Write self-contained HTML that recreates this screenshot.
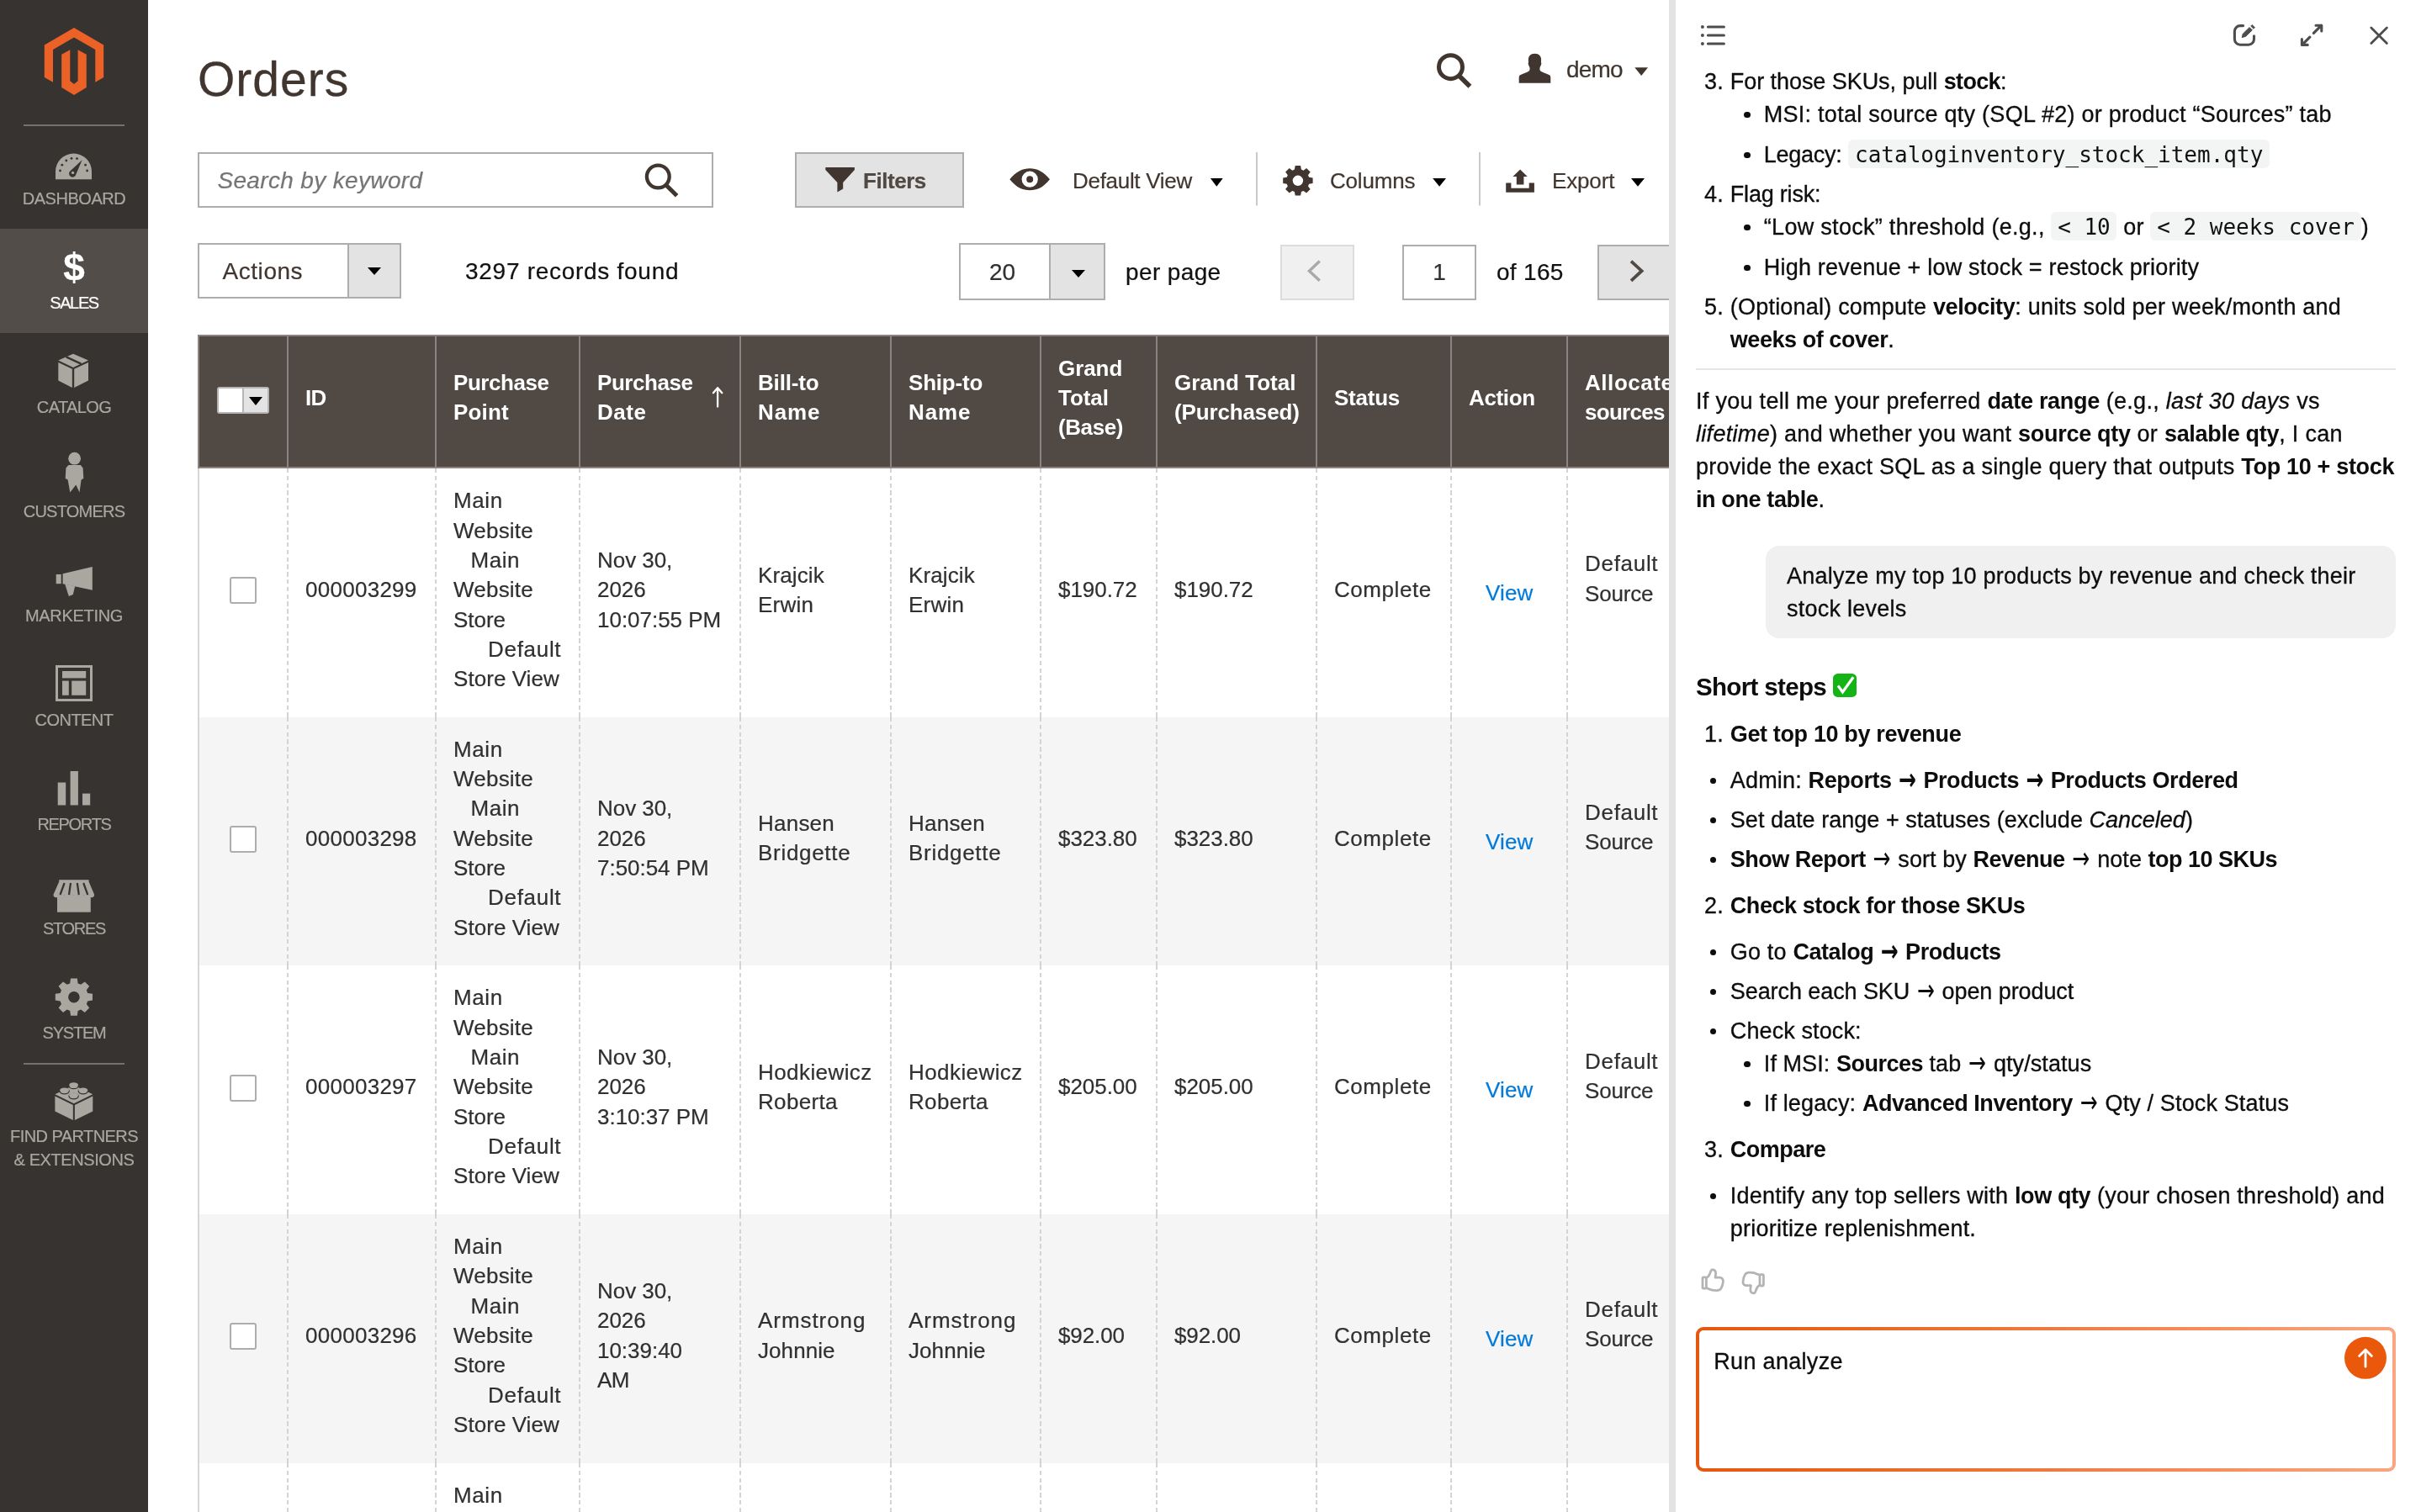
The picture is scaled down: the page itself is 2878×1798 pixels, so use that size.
<!DOCTYPE html><html lang="en"><head>
<meta charset="utf-8">
<title>Orders / Operations / Sales / Magento Admin</title>
<style>
*{box-sizing:border-box;margin:0;padding:0}
html,body{width:2878px;height:1798px;overflow:hidden;background:#fff}
body{position:relative;font-family:"Liberation Sans",sans-serif;color:#303030}
.abs{position:absolute}
.nw{white-space:nowrap}
/* ---------- sidebar ---------- */
#side{will-change:transform;position:absolute;left:0;top:0;width:176px;height:1798px;background:#373330}
#side .sep{position:absolute;left:28px;width:120px;height:2px;background:#75716d}
.mi{-webkit-text-stroke:.2px;position:absolute;left:0;width:176px;height:124px;color:#aaa6a0;text-align:center;font-size:20px;line-height:28px;letter-spacing:-.35px;white-space:nowrap}
.mi.on{background:#524d49;color:#fff}
.mi span{position:absolute;left:0;right:0;top:74px;display:block}
.mi em{font-style:normal;letter-spacing:calc(-.35px + var(--d,0px))}
.mi svg{position:absolute;fill:#aaa6a0}
.mi.on svg{fill:#fff}
/* ---------- main ---------- */
#main{will-change:transform;position:absolute;left:0;top:0;width:1984px;height:1798px;overflow:hidden}
#divider{position:absolute;left:1984px;top:0;width:8px;height:1798px;background:#e3e3e3}
h1{-webkit-text-stroke:.3px;position:absolute;left:235px;top:60px;font-size:57px;line-height:68px;font-weight:400;color:#41362f;letter-spacing:1px;white-space:nowrap}
.t28{-webkit-text-stroke:.22px;position:absolute;z-index:3;font-size:28px;line-height:36px;white-space:nowrap;color:#41362f}
.box{position:absolute;border:2px solid #adadad;background:#fff}
.gbox{position:absolute;border:2px solid #adadad;background:#e3e3e3}
.caret{position:absolute;z-index:3;width:0;height:0;border-left:8px solid transparent;border-right:8px solid transparent;border-top:9px solid #41362f}
.caret.k{border-top-color:#000}
.vsep{position:absolute;width:2px;background:#d1d1d1}
/* ---------- table ---------- */
#grid{position:absolute;left:235px;top:398px;width:1760px;height:1400px;font-size:26px;line-height:35.3px;letter-spacing:.2px}
#grid .td span{letter-spacing:calc(.2px + var(--d,0px))}
#grid .th span{letter-spacing:calc(-.2px + var(--d,0px))}
#grid .hd{position:absolute;left:0;top:0;height:159.3px;width:1760px;background:#514943;border:2px solid #8a837f;border-right:0}
#grid .row{position:absolute;left:0;width:1760px;height:296px;background:#fff}
#grid .row.alt{background:#f5f5f5}
#grid .lb{position:absolute;left:0;top:159px;width:2px;height:1300px;background:#d6d6d6}
.th{position:absolute;top:0;height:159px;border-left:2px solid #8a837f;color:#fff;font-weight:700;white-space:nowrap;letter-spacing:-.2px}
.th i{position:absolute;left:20px;font-style:normal;display:block}
.td{position:absolute;top:0;height:296px;white-space:nowrap;color:#303030;background:repeating-linear-gradient(to bottom,#d4d4d4 0,#d4d4d4 5.4px,transparent 5.4px,transparent 8.8px) left top/2px 100% no-repeat}
.td i{position:absolute;left:22px;font-style:normal;display:block;-webkit-text-stroke:.22px}
.td a{color:#007bdb;text-decoration:none}
.td u{text-decoration:none;display:inline-block}
.td u.i1{padding-left:20.4px}
.td u.i2{padding-left:41px}
.cb{position:absolute;width:32px;height:32px;border:2px solid #adadad;border-radius:3px;background:#fff}
.msel{position:absolute;left:23px;top:62px;width:62px;height:32px;border:2px solid #b5b5b5;border-radius:3px;background:#fff}
.msel s{position:absolute;left:28px;top:0;width:30px;height:28px;background:#e3e3e3;border-left:2px solid #b5b5b5}
.msel s:after{content:"";position:absolute;left:6px;top:9.5px;border-left:8px solid transparent;border-right:8px solid transparent;border-top:10px solid #000}
.sort{position:absolute;left:606px;top:52px;color:#fff;font-size:28px;line-height:36px;font-family:"DejaVu Sans",sans-serif}
/* ---------- chat ---------- */
#chat{will-change:transform;position:absolute;left:1992px;top:0;width:886px;height:1798px;background:#fff;color:#0d0d0d;font-size:27px;line-height:39px;letter-spacing:calc(.24px + var(--d,0px))}
#chat .ln{position:absolute;white-space:nowrap;-webkit-text-stroke:.3px}
#chat .ln b,#chat .ln code{-webkit-text-stroke:0}
#chat .ln .ar{-webkit-text-stroke:0}
#chat .ln,#chat .ln span{letter-spacing:calc(.24px + var(--d,0px))}
#chat .ar{font-family:"DejaVu Sans",sans-serif;font-size:25px;letter-spacing:0!important;display:inline-block;width:23.5px;text-align:center;line-height:30px;position:relative;top:-2.4px;transform:scaleY(1.45);transform-origin:50% 44%}
#chat b{font-weight:700;letter-spacing:calc(-.36px + var(--d,0px))}
#chat b.h3{font-size:29.5px}
#chat em{font-style:italic}
#chat code{font-family:"DejaVu Sans Mono","Liberation Mono",monospace;font-size:26px;letter-spacing:0;background:#f3f4f4;border-radius:6px;padding:3px 7.7px 1.4px;color:#111}
#chat svg{position:absolute}
#chat .dot{position:absolute;width:7.2px;height:7.2px;border-radius:50%;background:#0d0d0d}
#chat .hr{position:absolute;height:2px;background:#e6e6e6}
#chat .bubble{position:absolute;background:#f0f0f0;border-radius:16px}
#chat .chk{position:absolute;width:28px;height:28px;border-radius:6px;background:#2fc12f;color:#fff;font-family:"DejaVu Sans",sans-serif;font-size:22px;line-height:28px;text-align:center;letter-spacing:0}
#chat .inp{position:absolute;border-radius:9px;background:linear-gradient(90deg,#e5570f 0%,#ee7a3d 50%,#fba680 100%);padding:4px}
#chat .inp div{width:100%;height:100%;background:#fff;border-radius:5px}
</style>
</head>
<body>
<div id="main">
<h1>Orders</h1>
<svg class="abs" style="left:0;top:0;z-index:3" width="1984" height="400" viewBox="0 0 1984 400">
<g fill="none" stroke="#41362f" stroke-width="5"><circle cx="1724.5" cy="79.7" r="14"></circle><path d="M1734.4,90L1747.4,102.8" stroke-width="5.6"></path>
<circle cx="782.3" cy="210" r="13.4" stroke-width="4.3"></circle><path d="M792,220.2L804.6,232.8" stroke-width="5"></path></g>
<g fill="#41362f">
<path d="M1824.5,63.8c5.2,0 7.8,3.4 7.6,7.6c-0.1,2.2 -0.2,3 0.3,4.2c-0.4,2.4 -1.4,3.2 -1.8,4.6c-0.4,1.6 -0.2,3.6 0.8,4.4c2.6,1.6 6.6,3 9.4,4.2c1.8,0.8 2.5,1.6 2.5,3.4v6.6h-37.6v-6.6c0,-1.8 0.7,-2.6 2.5,-3.4c2.8,-1.2 6.8,-2.6 9.4,-4.2c1,-0.8 1.2,-2.8 0.8,-4.4c-0.4,-1.4 -1.4,-2.2 -1.8,-4.6c0.5,-1.2 0.4,-2 0.3,-4.2c-0.2,-4.2 2.4,-7.6 7.6,-7.6z"></path>
<polygon points="1943.3,80.2 1959,80.2 1951.2,90"></polygon>
<path d="M981.3,199H1015.9V202L1002.2,217V224.6L995.4,228.6V217L981.3,202Z"></path>
<path fill-rule="evenodd" d="M1200.3,213.3C1208,203.5 1216,200.2 1224.2,200.2C1232.4,200.2 1240.4,203.5 1248,213.3C1240.4,223 1232.4,226.3 1224.2,226.3C1216,226.3 1208,223 1200.3,213.3ZM1224.2,203.6A9.6,9.6 0 1 0 1224.2,222.8A9.6,9.6 0 1 0 1224.2,203.6ZM1224.2,209.2A4,4 0 1 1 1224.2,217.2A4,4 0 1 1 1224.2,209.2Z"></path>
<path fill-rule="evenodd" d="M1556.1,210.8 L1560.6,211.6 L1560.6,218.0 L1556.1,218.8 L1555.0,221.4 L1557.7,225.0 L1553.1,229.6 L1549.5,226.9 L1546.9,228.0 L1546.1,232.5 L1539.7,232.5 L1538.9,228.0 L1536.3,226.9 L1532.7,229.6 L1528.1,225.0 L1530.8,221.4 L1529.7,218.8 L1525.2,218.0 L1525.2,211.6 L1529.7,210.8 L1530.8,208.2 L1528.1,204.6 L1532.7,200.0 L1536.3,202.7 L1538.9,201.6 L1539.7,197.1 L1546.1,197.1 L1546.9,201.6 L1549.5,202.7 L1553.1,200.0 L1557.7,204.6 L1555.0,208.2ZM1549.1,214.8A6.2,6.2 0 1 0 1536.7,214.8A6.2,6.2 0 1 0 1549.1,214.8Z"></path>
<path d="M1790.2,217.5H1796.4V223.7H1817.7V217.5H1823.9V228.7H1790.2ZM1807.1,201.6L1815.8,210H1811.4V219.5H1802.8V210H1798.4Z"></path>
</g>
<g fill="#000"><polygon points="1438.9,212 1453.7,212 1446.3,221.8"></polygon><polygon points="1703.2,212 1719,212 1711.1,221.8"></polygon><polygon points="1939,212 1955,212 1947,221.8"></polygon></g>
<g stroke="#cacaca" stroke-width="2"><path d="M1494,181V244.6"></path><path d="M1759,181V244.6"></path></g>
</svg>
<div class="t28" style="left:1862px;top:64.6px;letter-spacing:-.8px">demo</div>
<div class="box" style="left:235px;top:181px;width:613px;height:66px"></div>
<div class="t28" style="left:258.4px;top:196.8px;font-style:italic;color:#757575;letter-spacing:.35px">Search by keyword</div>
<div class="gbox" style="left:945px;top:181px;width:201px;height:66px"></div>
<div class="t28" style="left:1026px;top:197px;font-size:26px;font-weight:700;letter-spacing:-.45px;color:#514943">Filters</div>
<div class="t28" style="left:1275px;top:197.4px;font-size:26px;letter-spacing:-.3px">Default View</div>
<div class="t28" style="left:1581px;top:197.4px;font-size:26px;letter-spacing:-.2px">Columns</div>
<div class="t28" style="left:1845px;top:197.4px;font-size:26px;letter-spacing:-.15px">Export</div>
<div class="box" style="left:235px;top:289px;width:242px;height:66px"></div>
<div class="gbox" style="left:413.4px;top:289px;width:63.6px;height:66px"></div>
<div class="caret k" style="left:437px;top:318px"></div>
<div class="t28" style="left:264.5px;top:304.6px;letter-spacing:.55px">Actions</div>
<div class="t28" style="left:553px;top:304.6px;letter-spacing:.72px;color:#111">3297 records found</div>
<div class="box" style="left:1140px;top:289px;width:174px;height:68px"></div>
<div class="gbox" style="left:1247px;top:289px;width:67px;height:68px"></div>
<div class="caret k" style="left:1274px;top:321px"></div>
<div class="t28" style="left:1176px;top:306.4px;color:#303030">20</div>
<div class="t28" style="left:1338px;top:306.4px;letter-spacing:.38px;color:#111">per page</div>
<div class="gbox" style="left:1522px;top:291px;width:88px;height:66px;background:#f0f0f0;border-color:#dcdcdc"></div>
<div class="box" style="left:1667px;top:291px;width:88px;height:66px"></div>
<div class="t28" style="left:1667px;top:306.4px;width:88px;text-align:center;color:#303030">1</div>
<div class="t28" style="left:1779px;top:306.4px;letter-spacing:.3px;color:#111">of 165</div>
<div class="gbox" style="left:1899px;top:291px;width:88px;height:66px"></div>
<svg class="abs" style="left:1500px;top:291px" width="484" height="66" viewBox="1500 291 484 66"><g fill="none" stroke-width="3.4"><path d="M1568.8,310.6L1556.4,322.2L1568.8,333.8" stroke="#a9a9a9"></path><path d="M1939,310.6L1951.6,322.2L1939,333.8" stroke="#514943" stroke-width="3.8"></path></g></svg>
<div id="grid">
<div class="hd"></div>
<div class="msel"><s></s></div>
<div class="th" style="left:106px;width:176px"><i style="top:57.9px"><span style="--d: -0.401px;">ID</span></i></div>
<div class="th" style="left:282px;width:171px"><i style="top:40.2px"><span style="--d: -0.246px;">Purchase</span><br><span style="--d: 0.362px;">Point</span></i></div>
<div class="th" style="left:453px;width:191px"><i style="top:40.2px"><span style="--d: -0.246px;">Purchase</span><br><span style="--d: 0.709px;">Date</span></i></div>
<div class="th" style="left:644px;width:179px"><i style="top:40.2px"><span style="--d: 0.036px;">Bill-to</span><br><span style="--d: 1.069px;">Name</span></i></div>
<div class="th" style="left:823px;width:178px"><i style="top:40.2px"><span style="--d: -0.004px;">Ship-to</span><br><span style="--d: 1.069px;">Name</span></i></div>
<div class="th" style="left:1001px;width:138px"><i style="top:22.6px"><span style="--d: 0.126px;">Grand</span><br><span style="--d: 0.143px;">Total</span><br><span style="--d: -0.214px;">(Base)</span></i></div>
<div class="th" style="left:1139px;width:190px"><i style="top:40.2px"><span style="--d: 0.258px;">Grand Total</span><br><span style="--d: 0.058px;">(Purchased)</span></i></div>
<div class="th" style="left:1329px;width:160px"><i style="top:57.9px"><span style="--d: -0.044px;">Status</span></i></div>
<div class="th" style="left:1489px;width:138px"><i style="top:57.9px"><span style="--d: -0.149px;">Action</span></i></div>
<div class="th" style="left:1627px;width:133px"><i style="top:40.2px"><span style="--d: 0.752px;">Allocated</span><br><span style="--d: -0.504px;">sources</span></i></div>
<svg class="abs" style="left:600px;top:50px" width="40" height="50" viewBox="835 448 40 50"><path d="M853.1,483.6V461.4M847.9,467.2L853.1,461.2L858.3,467.2" fill="none" stroke="#fff" stroke-width="2.3" stroke-linecap="round" stroke-linejoin="round"></path></svg>
<div class="row" style="top:159.3px">
<div class="cb" style="left:38px;top:129.2px"></div>
<div class="td" style="left:106px;width:176px"><i style="top:127.0px"><span style="--d: 0.072px;">000003299</span></i></div>
<div class="td" style="left:282px;width:171px"><i style="top:21.1px"><span style="--d: 0.384px;">Main</span><br><span style="--d: 0.020px;">Website</span><br><u class="i1"><span style="--d: 0.384px;">Main</span></u><br><span style="--d: 0.020px;">Website</span><br><span style="--d: -0.250px;">Store</span><br><u class="i2"><span style="--d: 0.501px;">Default</span></u><br><span style="--d: -0.147px;">Store View</span></i></div>
<div class="td" style="left:453px;width:191px"><i style="top:91.7px"><span style="--d: -0.245px;">Nov 30,</span><br><span style="--d: -0.237px;">2026</span><br><span style="--d: -0.222px;">10:07:55 PM</span></i></div>
<div class="td" style="left:644px;width:179px"><i style="top:109.3px"><span style="--d: -0.089px;">Krajcik</span><br><span style="--d: 0.035px;">Erwin</span></i></div>
<div class="td" style="left:823px;width:178px"><i style="top:109.3px"><span style="--d: -0.089px;">Krajcik</span><br><span style="--d: 0.035px;">Erwin</span></i></div>
<div class="td" style="left:1001px;width:138px"><i style="top:127.0px"><span style="--d: -0.242px;">$190.72</span></i></div>
<div class="td" style="left:1139px;width:190px"><i style="top:127.0px"><span style="--d: -0.242px;">$190.72</span></i></div>
<div class="td" style="left:1329px;width:160px"><i style="top:127.0px"><span style="--d: 0.364px;">Complete</span></i></div>
<div class="td" style="left:1489px;width:138px"><i style="top:130.8px;left:42px"><a><span style="--d: -0.047px;">View</span></a></i></div>
<div class="td" style="left:1627px;width:133px"><i style="top:96.2px"><span style="--d: 0.501px;">Default</span><br><span style="--d: -0.365px;">Source</span></i></div>
</div>
<div class="row alt" style="top:454.8px">
<div class="cb" style="left:38px;top:129.2px"></div>
<div class="td" style="left:106px;width:176px"><i style="top:127.0px"><span style="--d: 0.072px;">000003298</span></i></div>
<div class="td" style="left:282px;width:171px"><i style="top:21.1px"><span style="--d: 0.384px;">Main</span><br><span style="--d: 0.020px;">Website</span><br><u class="i1"><span style="--d: 0.384px;">Main</span></u><br><span style="--d: 0.020px;">Website</span><br><span style="--d: -0.250px;">Store</span><br><u class="i2"><span style="--d: 0.501px;">Default</span></u><br><span style="--d: -0.147px;">Store View</span></i></div>
<div class="td" style="left:453px;width:191px"><i style="top:91.7px"><span style="--d: -0.245px;">Nov 30,</span><br><span style="--d: -0.237px;">2026</span><br><span style="--d: -0.228px;">7:50:54 PM</span></i></div>
<div class="td" style="left:644px;width:179px"><i style="top:109.3px"><span style="--d: 0.029px;">Hansen</span><br><span style="--d: 0.503px;">Bridgette</span></i></div>
<div class="td" style="left:823px;width:178px"><i style="top:109.3px"><span style="--d: 0.029px;">Hansen</span><br><span style="--d: 0.503px;">Bridgette</span></i></div>
<div class="td" style="left:1001px;width:138px"><i style="top:127.0px"><span style="--d: -0.242px;">$323.80</span></i></div>
<div class="td" style="left:1139px;width:190px"><i style="top:127.0px"><span style="--d: -0.242px;">$323.80</span></i></div>
<div class="td" style="left:1329px;width:160px"><i style="top:127.0px"><span style="--d: 0.364px;">Complete</span></i></div>
<div class="td" style="left:1489px;width:138px"><i style="top:130.8px;left:42px"><a><span style="--d: -0.047px;">View</span></a></i></div>
<div class="td" style="left:1627px;width:133px"><i style="top:96.2px"><span style="--d: 0.501px;">Default</span><br><span style="--d: -0.365px;">Source</span></i></div>
</div>
<div class="row" style="top:750.4px">
<div class="cb" style="left:38px;top:129.2px"></div>
<div class="td" style="left:106px;width:176px"><i style="top:127.0px"><span style="--d: 0.072px;">000003297</span></i></div>
<div class="td" style="left:282px;width:171px"><i style="top:21.1px"><span style="--d: 0.384px;">Main</span><br><span style="--d: 0.020px;">Website</span><br><u class="i1"><span style="--d: 0.384px;">Main</span></u><br><span style="--d: 0.020px;">Website</span><br><span style="--d: -0.250px;">Store</span><br><u class="i2"><span style="--d: 0.501px;">Default</span></u><br><span style="--d: -0.147px;">Store View</span></i></div>
<div class="td" style="left:453px;width:191px"><i style="top:91.7px"><span style="--d: -0.245px;">Nov 30,</span><br><span style="--d: -0.237px;">2026</span><br><span style="--d: -0.228px;">3:10:37 PM</span></i></div>
<div class="td" style="left:644px;width:179px"><i style="top:109.3px"><span style="--d: 0.221px;">Hodkiewicz</span><br><span style="--d: 0.128px;">Roberta</span></i></div>
<div class="td" style="left:823px;width:178px"><i style="top:109.3px"><span style="--d: 0.221px;">Hodkiewicz</span><br><span style="--d: 0.128px;">Roberta</span></i></div>
<div class="td" style="left:1001px;width:138px"><i style="top:127.0px"><span style="--d: -0.242px;">$205.00</span></i></div>
<div class="td" style="left:1139px;width:190px"><i style="top:127.0px"><span style="--d: -0.242px;">$205.00</span></i></div>
<div class="td" style="left:1329px;width:160px"><i style="top:127.0px"><span style="--d: 0.364px;">Complete</span></i></div>
<div class="td" style="left:1489px;width:138px"><i style="top:130.8px;left:42px"><a><span style="--d: -0.047px;">View</span></a></i></div>
<div class="td" style="left:1627px;width:133px"><i style="top:96.2px"><span style="--d: 0.501px;">Default</span><br><span style="--d: -0.365px;">Source</span></i></div>
</div>
<div class="row alt" style="top:1046.0px">
<div class="cb" style="left:38px;top:129.2px"></div>
<div class="td" style="left:106px;width:176px"><i style="top:127.0px"><span style="--d: 0.072px;">000003296</span></i></div>
<div class="td" style="left:282px;width:171px"><i style="top:21.1px"><span style="--d: 0.384px;">Main</span><br><span style="--d: 0.020px;">Website</span><br><u class="i1"><span style="--d: 0.384px;">Main</span></u><br><span style="--d: 0.020px;">Website</span><br><span style="--d: -0.250px;">Store</span><br><u class="i2"><span style="--d: 0.501px;">Default</span></u><br><span style="--d: -0.147px;">Store View</span></i></div>
<div class="td" style="left:453px;width:191px"><i style="top:74.1px"><span style="--d: -0.245px;">Nov 30,</span><br><span style="--d: -0.237px;">2026</span><br><span style="--d: -0.227px;">10:39:40</span><br><span style="--d: -0.751px;">AM</span></i></div>
<div class="td" style="left:644px;width:179px"><i style="top:109.3px"><span style="--d: 0.741px;">Armstrong</span><br><span style="--d: -0.126px;">Johnnie</span></i></div>
<div class="td" style="left:823px;width:178px"><i style="top:109.3px"><span style="--d: 0.741px;">Armstrong</span><br><span style="--d: -0.126px;">Johnnie</span></i></div>
<div class="td" style="left:1001px;width:138px"><i style="top:127.0px"><span style="--d: -0.305px;">$92.00</span></i></div>
<div class="td" style="left:1139px;width:190px"><i style="top:127.0px"><span style="--d: -0.305px;">$92.00</span></i></div>
<div class="td" style="left:1329px;width:160px"><i style="top:127.0px"><span style="--d: 0.364px;">Complete</span></i></div>
<div class="td" style="left:1489px;width:138px"><i style="top:130.8px;left:42px"><a><span style="--d: -0.047px;">View</span></a></i></div>
<div class="td" style="left:1627px;width:133px"><i style="top:96.2px"><span style="--d: 0.501px;">Default</span><br><span style="--d: -0.365px;">Source</span></i></div>
</div>
<div class="row" style="top:1341.6px">
<div class="td" style="left:106px;width:176px"></div>
<div class="td" style="left:282px;width:171px"><i style="top:21.1px"><span style="--d: 0.384px;">Main</span><br><span style="--d: 0.020px;">Website</span></i></div>
<div class="td" style="left:453px;width:191px"></div>
<div class="td" style="left:644px;width:179px"></div>
<div class="td" style="left:823px;width:178px"></div>
<div class="td" style="left:1001px;width:138px"></div>
<div class="td" style="left:1139px;width:190px"></div>
<div class="td" style="left:1329px;width:160px"></div>
<div class="td" style="left:1489px;width:138px"></div>
<div class="td" style="left:1627px;width:133px"></div>
</div>
<div class="lb"></div>
</div>
<!--/grid-->
</div>
<div id="side">
<svg class="abs" style="left:0;top:0" width="176" height="1798" viewBox="0 0 176 1798">
<g fill="#eb6126" transform="translate(52.8,33)">
<polygon points="35.2,0 70.4,20.4 70.4,59 60.5,64.8 60.5,26 35.2,11.5 10.2,26 10.2,64.8 0,59 0,20.4"></polygon>
<polygon points="20.4,31.8 30.5,26.3 30.5,63.3 35.2,67 39.8,63.3 39.8,26.3 50,31.8 50,71.1 35.2,80 20.4,71.1"></polygon>
</g>
<g fill="#aaa6a0">
<!-- dashboard -->
<path d="M66,213.3V204A21.5,21.5 0 0 1 109,204V213.3Z"></path>
<g fill="#373330"><circle cx="71.5" cy="203" r="1.4"></circle><circle cx="73.8" cy="196.2" r="1.4"></circle><circle cx="78.8" cy="191" r="1.4"></circle><circle cx="85" cy="188.4" r="1.4"></circle><circle cx="91.5" cy="188.6" r="1.4"></circle><circle cx="101.6" cy="196.2" r="1.4"></circle><circle cx="103.6" cy="203" r="1.4"></circle>
<path d="M97.6,190.2L90.4,207.2A4.2,4.2 0 1 1 83.6,203.2Z"></path></g>
<circle cx="86.6" cy="205.4" r="1.7"></circle>
<!-- catalog -->
<polygon points="87,420.8 105,428.6 87,437 69.3,428.6"></polygon>
<polygon points="69.3,431 85.8,438.8 85.8,461 69.3,452.6"></polygon>
<polygon points="88.2,438.8 105,431 105,452.6 88.2,461"></polygon>
<path d="M78.6,424.3L96.4,432.6" stroke="#373330" stroke-width="2.4" fill="none"></path>
<!-- customers -->
<circle cx="88.6" cy="545.2" r="7.4"></circle>
<polygon points="81.5,553 95.8,553 98.6,556.5 99.3,569 96.6,570.5 94.5,585.4 90.3,576.5 88.4,579 83.3,585.4 80.6,570.5 77.7,569 78.4,556.5"></polygon>
<!-- marketing -->
<polygon points="74.6,682.2 109.8,674 109.8,701.8 74.6,694.2"></polygon>
<rect x="66.7" y="683" width="6" height="11.2"></rect>
<polygon points="77.2,694.4 89.2,697 86.8,707 81.8,709"></polygon>
<!-- content -->
<path d="M66,791H110V834H66ZM69,794V831H107V794Z" fill-rule="evenodd"></path>
<rect x="74" y="798" width="28.2" height="8.4"></rect><rect x="74" y="809.6" width="7.8" height="17.2"></rect><rect x="85.2" y="809.6" width="17" height="17.2"></rect>
<!-- reports -->
<rect x="68.7" y="930.5" width="9.5" height="27"></rect><rect x="83.6" y="917" width="9.3" height="40.5"></rect><rect x="98" y="943.6" width="9.2" height="13.9"></rect>
<!-- stores -->
<rect x="68" y="1065" width="39.8" height="19.7"></rect>
<path d="M70.2,1046.3H105.6V1048.6L112,1063.5A3.2,3.2 0 0 1 105.6,1064.6A3.2,3.2 0 0 1 99.6,1064.6A3.2,3.2 0 0 1 93.8,1064.6A3.2,3.2 0 0 1 87.9,1064.6A3.2,3.2 0 0 1 82,1064.6A3.2,3.2 0 0 1 76,1064.6A3.2,3.2 0 0 1 70,1064.6A3.2,3.2 0 0 1 63.6,1063.5L70.2,1048.6Z"></path>
<g stroke="#373330" stroke-width="2.2" fill="none"><path d="M76.6,1050L71.5,1064"></path><path d="M84,1050L82,1064"></path><path d="M91.8,1050L93.8,1064"></path><path d="M99.2,1050L104.3,1064"></path></g>
<!-- system -->
<path fill-rule="evenodd" d="M104.2,1181.0 L110.0,1181.8 L110.0,1189.6 L104.2,1190.4 L102.8,1193.9 L106.2,1198.6 L100.8,1204.0 L96.1,1200.6 L92.6,1202.0 L91.8,1207.8 L84.0,1207.8 L83.2,1202.0 L79.7,1200.6 L75.0,1204.0 L69.6,1198.6 L73.0,1193.9 L71.6,1190.4 L65.8,1189.6 L65.8,1181.8 L71.6,1181.0 L73.0,1177.5 L69.6,1172.8 L75.0,1167.4 L79.7,1170.8 L83.2,1169.4 L84.0,1163.6 L91.8,1163.6 L92.6,1169.4 L96.1,1170.8 L100.8,1167.4 L106.2,1172.8 L102.8,1177.5ZM94.7,1185.7A6.8,6.8 0 1 0 81.1,1185.7A6.8,6.8 0 1 0 94.7,1185.7Z"></path>
<!-- partners -->
<polygon points="87.8,1290.5 110.3,1301.2 87.8,1312.2 65.4,1301.2"></polygon>
<polygon points="65.4,1303.6 86.8,1314 86.8,1332 65.4,1321.4"></polygon>
<polygon points="88.9,1314 110.3,1303.6 110.3,1321.4 88.9,1332"></polygon>
<g stroke="#373330" stroke-width="1.3"><ellipse cx="87.6" cy="1291.4" rx="5.6" ry="3.2"></ellipse><ellipse cx="76.6" cy="1297.6" rx="5.6" ry="3.2"></ellipse><ellipse cx="98.8" cy="1297.6" rx="5.6" ry="3.2"></ellipse><ellipse cx="87.6" cy="1303.6" rx="5.6" ry="3.2"></ellipse></g>
<ellipse cx="87.6" cy="1290" rx="5.4" ry="2.8"></ellipse><ellipse cx="76.6" cy="1296.2" rx="5.4" ry="2.8"></ellipse><ellipse cx="98.8" cy="1296.2" rx="5.4" ry="2.8"></ellipse><ellipse cx="87.6" cy="1302.2" rx="5.4" ry="2.8"></ellipse>
</g>
</svg>
<div class="sep" style="top:148px"></div>
<div class="mi" style="top:148px"><span><em style="--d: -0.116px;">DASHBOARD</em></span></div>
<div class="mi on" style="top:272px"><b class="abs" style="left:0;width:176px;top:20px;font-size:46px;line-height:52px;letter-spacing:0;font-weight:700">$</b><span><em style="--d: -1.009px;">SALES</em></span></div>
<div class="mi" style="top:396px"><span><em style="--d: -0.253px;">CATALOG</em></span></div>
<div class="mi" style="top:520px"><span><em style="--d: -0.420px;">CUSTOMERS</em></span></div>
<div class="mi" style="top:644px"><span><em style="--d: 0.028px;">MARKETING</em></span></div>
<div class="mi" style="top:768px"><span><em style="--d: -0.203px;">CONTENT</em></span></div>
<div class="mi" style="top:892px"><span><em style="--d: -0.954px;">REPORTS</em></span></div>
<div class="mi" style="top:1016px"><span><em style="--d: -0.948px;">STORES</em></span></div>
<div class="mi" style="top:1140px"><span><em style="--d: -0.875px;">SYSTEM</em></span></div>
<div class="sep" style="top:1264px"></div>
<div class="mi" style="top:1265px;height:150px"><span style="top:72px"><em style="--d: -0.210px;">FIND PARTNERS</em><br><em style="--d: -0.069px;">&amp; EXTENSIONS</em></span></div>
</div>
<div id="divider"></div>
<div id="chat">
<svg style="left:0;top:0" width="886" height="70" viewBox="1992 0 886 70"><g fill="none" stroke="#4d4d4d" stroke-width="3.1" stroke-linecap="round" stroke-linejoin="round">
<path d="M2030.4,32H2049.4M2030.4,42H2049.4M2030.4,52H2049.4"></path>
<path d="M2666.6,30.6H2663a6.6,6.6 0 0 0 -6.6,6.6V46.6a6.6,6.6 0 0 0 6.6,6.6H2672.9a6.6,6.6 0 0 0 6.6,-6.6V42.8"></path>
<path d="M2750.4,39.4L2759.6,30.2M2753,30.2H2759.8V37M2745.8,44.2L2736.6,53.4M2743.2,53.4H2736.4V46.6"></path>
<path d="M2818.8,33L2837.4,51.6M2837.4,33L2818.8,51.6" stroke-width="2.8"></path>
</g><g fill="#4d4d4d"><circle cx="2023.9" cy="32" r="2"></circle><circle cx="2023.9" cy="42" r="2"></circle><circle cx="2023.9" cy="52" r="2"></circle>
<path d="M2665.2,44.5L2666.3,40.2L2674.1,32.6L2677.3,35.8L2669.5,43.4Z" stroke="#4d4d4d" stroke-width="1" stroke-linejoin="round"></path><path d="M2675.7,31L2677.2,29.5L2680.5,32.7L2678.9,34.2Z" stroke="#4d4d4d" stroke-width=".8" stroke-linejoin="round"></path></g></svg>
<div class="ln" style="left:34.0px;top:77.8px">3.</div>
<div class="ln" style="left: 64.8px; top: 77.8px; --d: -0.298px;">For those SKUs, pull <b>stock</b>:</div>
<div class="dot" style="left:81.4px;top:132.8px"></div>
<div class="ln" style="left: 104.8px; top: 116.8px; --d: 0.020px;">MSI: total source qty (SQL #2) or product “Sources” tab</div>
<div class="dot" style="left:81.4px;top:181.1px"></div>
<div class="ln" style="left:104.8px;top:165.1px"><span style="--d: -0.493px;">Legacy:</span> <code>cataloginventory_stock_item.qty</code></div>
<div class="ln" style="left:34.0px;top:211.8px">4.</div>
<div class="ln" style="left: 64.8px; top: 211.8px; --d: -0.442px;">Flag risk:</div>
<div class="dot" style="left:81.4px;top:266.8px"></div>
<div class="ln" style="left:104.8px;top:250.8px"><span style="--d: 0.055px;">“Low stock” threshold (e.g.,</span> <code>&lt; 10</code> or <code>&lt; 2 weeks cover</code>)</div>
<div class="dot" style="left:81.4px;top:314.8px"></div>
<div class="ln" style="left: 104.8px; top: 298.8px; --d: -0.036px;">High revenue + low stock = restock priority</div>
<div class="ln" style="left:34.0px;top:346.2px">5.</div>
<div class="ln" style="left: 64.8px; top: 346.2px; --d: -0.031px;">(Optional) compute <b>velocity</b>: units sold per week/month and</div>
<div class="ln" style="left: 64.8px; top: 385.1px; --d: -0.082px;"><b>weeks of cover</b>.</div>
<div class="hr" style="left:24px;top:438px;width:832px"></div>
<div class="ln" style="left: 24px; top: 457.8px; --d: 0.053px;">If you tell me your preferred <b>date range</b> (e.g., <em>last 30 days</em> vs</div>
<div class="ln" style="left: 24px; top: 496.8px; --d: 0.063px;"><em>lifetime</em>) and whether you want <b>source qty</b> or <b>salable qty</b>, I can</div>
<div class="ln" style="left: 24px; top: 535.8px; --d: 0.033px;">provide the exact SQL as a single query that outputs <b>Top 10 + stock</b></div>
<div class="ln" style="left: 24px; top: 574.8px; --d: -0.019px;"><b>in one table</b>.</div>
<div class="bubble" style="left:106.6px;top:649px;width:749.4px;height:109.7px"></div>
<div class="ln" style="left: 132px; top: 666.4px; --d: -0.021px;">Analyze my top 10 products by revenue and check their</div>
<div class="ln" style="left: 132px; top: 705.3px; --d: -0.003px;">stock levels</div>
<div class="ln" style="left: 24px; top: 796.8px; --d: -0.303px;"><b class="h3">Short steps</b></div>
<svg style="left:186.8px;top:801px" width="28.4" height="28.4" viewBox="2178.8 801 28.4 28.4"><rect x="2178.8" y="801" width="28.2" height="28" rx="5.6" fill="#14b416"></rect><path d="M2184.8,815.4L2190.2,823L2203,805.2" fill="none" stroke="#fff" stroke-width="3.2" stroke-linejoin="miter"></path></svg>
<div class="ln" style="left:34.0px;top:854.2px">1.</div>
<div class="ln" style="left: 64.8px; top: 854.2px; --d: -0.002px;"><b>Get top 10 by revenue</b></div>
<div class="dot" style="left:40.8px;top:925.1px"></div>
<div class="ln" style="left: 64.8px; top: 909.1px; --d: -0.058px;">Admin: <b>Reports <span class="ar">→</span> Products <span class="ar">→</span> Products Ordered</b></div>
<div class="dot" style="left:40.8px;top:972.2px"></div>
<div class="ln" style="left: 64.8px; top: 956.2px; --d: -0.206px;">Set date range + statuses (exclude <em>Canceled</em>)</div>
<div class="dot" style="left:40.8px;top:1019.3px"></div>
<div class="ln" style="left: 64.8px; top: 1003.3px; --d: -0.156px;"><b>Show Report</b> <span class="ar">→</span> sort by <b>Revenue</b> <span class="ar">→</span> note <b>top 10 SKUs</b></div>
<div class="ln" style="left:34.0px;top:1058.2px">2.</div>
<div class="ln" style="left: 64.8px; top: 1058.2px; --d: -0.067px;"><b>Check stock for those SKUs</b></div>
<div class="dot" style="left:40.8px;top:1129.1px"></div>
<div class="ln" style="left: 64.8px; top: 1113.1px; --d: -0.066px;">Go to <b>Catalog <span class="ar">→</span> Products</b></div>
<div class="dot" style="left:40.8px;top:1176.2px"></div>
<div class="ln" style="left: 64.8px; top: 1160.2px; --d: -0.321px;">Search each SKU <span class="ar">→</span> open product</div>
<div class="dot" style="left:40.8px;top:1223.3px"></div>
<div class="ln" style="left: 64.8px; top: 1207.3px; --d: -0.137px;">Check stock:</div>
<div class="dot" style="left:81.4px;top:1262.2px"></div>
<div class="ln" style="left: 104.8px; top: 1246.2px; --d: -0.159px;">If MSI: <b>Sources</b> tab <span class="ar">→</span> qty/status</div>
<div class="dot" style="left:81.4px;top:1309.0px"></div>
<div class="ln" style="left: 104.8px; top: 1293px; --d: -0.100px;">If legacy: <b>Advanced Inventory</b> <span class="ar">→</span> Qty / Stock Status</div>
<div class="ln" style="left:34.0px;top:1348.3px">3.</div>
<div class="ln" style="left: 64.8px; top: 1348.3px; --d: -0.145px;"><b>Compare</b></div>
<div class="dot" style="left:40.8px;top:1419.2px"></div>
<div class="ln" style="left: 64.8px; top: 1403.2px; --d: -0.024px;">Identify any top sellers with <b>low qty</b> (your chosen threshold) and</div>
<div class="ln" style="left: 64.8px; top: 1442.1px; --d: -0.013px;">prioritize replenishment.</div>
<svg style="left:0;top:1490px" width="300" height="60" viewBox="1992 1490 300 60"><g fill="none" stroke="#b4b4b4" stroke-width="2.8" stroke-linejoin="round" stroke-linecap="round"><path d="M2028.3,1519.9C2030.6,1518.6 2032.2,1516 2033,1513.6C2033.6,1511.6 2034,1509.9 2035.6,1509.9C2038,1509.9 2039.6,1511.6 2039.6,1514.2C2039.6,1516 2039.2,1517.6 2039,1519.2H2044.2C2046.8,1519.2 2048.6,1521 2048.4,1523.4C2048.2,1526.4 2047.4,1529.8 2046,1532C2044.8,1534 2043,1534.6 2040.4,1534.6C2036.4,1534.6 2033,1533.6 2030.6,1532.4L2028.3,1531.4M2025,1518.8H2027.4a1,1 0 0 1 1,1V1531.2a1,1 0 0 1 -1,1H2025a1,1 0 0 1 -1,-1V1519.8a1,1 0 0 1 1,-1Z"></path><path transform="translate(4120.4,3047.8) scale(-1,-1)" d="M2028.3,1519.9C2030.6,1518.6 2032.2,1516 2033,1513.6C2033.6,1511.6 2034,1509.9 2035.6,1509.9C2038,1509.9 2039.6,1511.6 2039.6,1514.2C2039.6,1516 2039.2,1517.6 2039,1519.2H2044.2C2046.8,1519.2 2048.6,1521 2048.4,1523.4C2048.2,1526.4 2047.4,1529.8 2046,1532C2044.8,1534 2043,1534.6 2040.4,1534.6C2036.4,1534.6 2033,1533.6 2030.6,1532.4L2028.3,1531.4M2025,1518.8H2027.4a1,1 0 0 1 1,1V1531.2a1,1 0 0 1 -1,1H2025a1,1 0 0 1 -1,-1V1519.8a1,1 0 0 1 1,-1Z"></path></g></svg>
<div class="inp" style="left:24px;top:1578px;width:832px;height:172px"><div></div></div>
<div class="ln" style="left: 45.3px; top: 1600px; --d: 0.069px;">Run analyze</div>
<svg style="left:780px;top:1580px" width="70" height="70" viewBox="2772 1580 70 70"><circle cx="2812" cy="1614.8" r="25" fill="#ea580c"></circle><path d="M2812,1625.2V1605.2M2804.6,1612.6L2812,1605L2819.4,1612.6" fill="none" stroke="#fff" stroke-width="2.8" stroke-linecap="round" stroke-linejoin="round"></path></svg>
</div>
<!--/chat-->
<script>(function(){var w=window.innerWidth;if(w&&Math.abs(w-2878)>1){document.documentElement.style.zoom=w/2878}})()</script>


</body></html>
